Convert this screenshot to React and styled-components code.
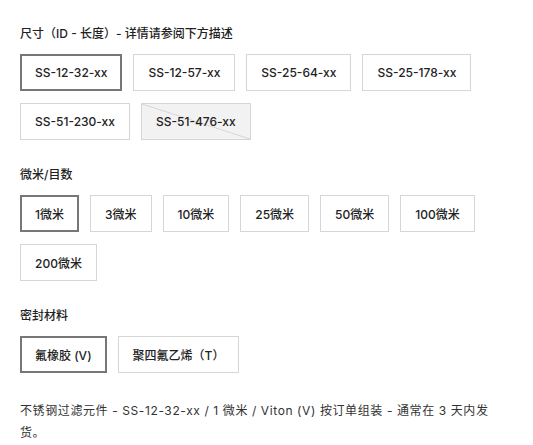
import styled, { createGlobalStyle } from "styled-components";

const GlobalStyle = createGlobalStyle`
  body {
    margin: 0;
    background: #ffffff;
    font-family: Inter, "Noto Sans CJK SC", sans-serif;
    color: #222222;
  }
`;

const Page = styled.main`
  display: flex;
  flex-direction: column;
  gap: 27px;
  padding: 26px 20px 0 20px;
  width: 533px;
  box-sizing: border-box;
`;

const Section = styled.section`
  display: flex;
  flex-direction: column;
  gap: 12px;
`;

const Heading = styled.h4`
  margin: 0;
  font-size: 12px;
  line-height: 16px;
  font-weight: 500;
  color: #222;
`;

const Options = styled.div`
  display: flex;
  flex-wrap: wrap;
  gap: 12px 11px;
`;

const Option = styled.button`
  display: flex;
  align-items: center;
  justify-content: center;
  margin: 0;
  height: 37px;
  padding: ${(p) => (p.$selected ? "0 13px" : "0 14px")};
  box-sizing: border-box;
  font-family: inherit;
  font-size: 12px;
  font-weight: 500;
  color: #222;
  background: ${(p) =>
    p.$disabled
      ? "linear-gradient(to top right, transparent calc(50% - 0.8px), #d2d2d2, transparent calc(50% + 0.8px)), #f2f2f2"
      : "#fff"};
  border: ${(p) => (p.$selected ? "2px solid #777" : "1px solid #d6d6d6")};
  cursor: pointer;
`;

const Summary = styled.p`
  margin: 0;
  font-size: 12px;
  line-height: 22px;
  letter-spacing: 0.6px;
  color: #333;
`;

const sections = [
  {
    title: "尺寸（ID - 长度）- 详情请参阅下方描述",
    options: ["SS-12-32-xx", "SS-12-57-xx", "SS-25-64-xx", "SS-25-178-xx", "SS-51-230-xx", "SS-51-476-xx"],
    selected: 0,
    disabled: [5],
  },
  {
    title: "微米/目数",
    options: ["1微米", "3微米", "10微米", "25微米", "50微米", "100微米", "200微米"],
    selected: 0,
    disabled: [],
  },
  {
    title: "密封材料",
    options: ["氟橡胶 (V)", "聚四氟乙烯（T）"],
    selected: 0,
    disabled: [],
  },
];

export default function App() {
  return (
    <>
      <GlobalStyle />
      <Page>
        {sections.map((s) => (
          <Section key={s.title}>
            <Heading>{s.title}</Heading>
            <Options>
              {s.options.map((o, i) => (
                <Option key={o} $selected={i === s.selected} $disabled={s.disabled.includes(i)}>
                  {o}
                </Option>
              ))}
            </Options>
          </Section>
        ))}
        <Summary>
          不锈钢过滤元件 - SS-12-32-xx / 1 微米 / Viton (V) 按订单组装 - 通常在 3 天内发货。
        </Summary>
      </Page>
    </>
  );
}
